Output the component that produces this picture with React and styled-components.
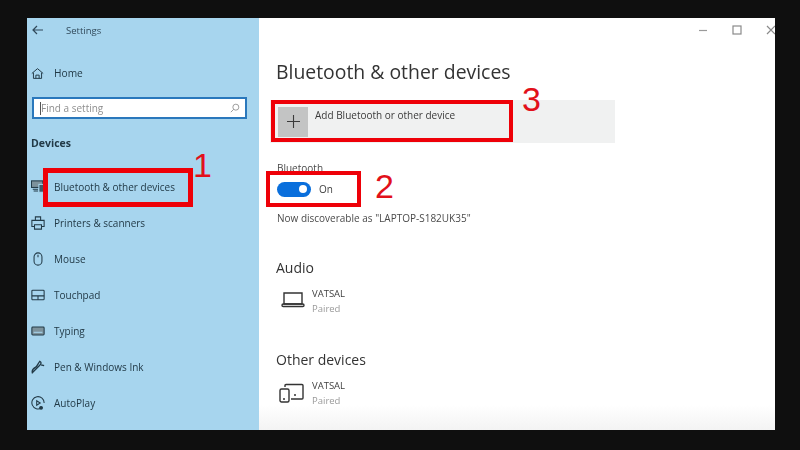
import React from "react";
import styled, { createGlobalStyle } from "styled-components";

const Global = createGlobalStyle`
  html, body { margin: 0; padding: 0; background: #0f0f0f; }
  body { width: 800px; height: 450px; overflow: hidden; font-family: "Open Sans", "Noto Sans", sans-serif; }
`;

const Page = styled.div`
  position: relative;
  width: 800px;
  height: 450px;
  box-sizing: border-box;
  padding: 18px 25px 20px 27px;
  background: #0f0f0f;
  overflow: hidden;
`;
const Window = styled.div`
  display: flex;
  height: 100%;
  filter: blur(0.55px);
`;
const Sidebar = styled.aside`
  width: 232px;
  flex: none;
  display: flex;
  flex-direction: column;
  background: #a7d5ee;
  color: #223a47;
  padding: 0 12px 0 5px;
  box-sizing: border-box;
`;
const TitleBar = styled.div`
  display: flex;
  align-items: center;
  height: 24px;
  font-size: 9.5px;
  color: #31495a;
  svg { width: 12px; height: 10px; flex: none; }
  span { margin-left: 22px; }
`;
const Home = styled.div`
  display: flex;
  align-items: center;
  gap: 10px;
  height: 20px;
  margin-top: 21px;
  font-size: 10.2px;
  color: #223a47;
  svg { margin-left: -1px; }
`;
const Search = styled.div`
  display: flex;
  align-items: center;
  justify-content: space-between;
  height: 22px;
  margin-top: 14px;
  box-sizing: border-box;
  border: 2px solid #2a78bc;
  background: #fff;
  color: #8f8f8f;
  font-size: 10px;
  padding: 0 5px 0 7px;
  position: relative;
`;
const Caret = styled.i`
  position: absolute;
  left: 6px;
  top: 3px;
  width: 1px;
  height: 13px;
  background: #555;
`;
const SectionLabel = styled.div`
  margin-top: 16px;
  height: 16px;
  line-height: 16px;
  font-size: 10.5px;
  font-weight: 700;
  color: #223a47;
  margin-left: -1px;
`;
const NavList = styled.nav`
  display: flex;
  flex-direction: column;
  margin-top: 18px;
`;
const NavItem = styled.div`
  display: flex;
  align-items: center;
  height: 36px;
  font-size: 10px;
  color: #223a47;
  svg { width: 14px; height: 14px; flex: none; margin-right: 9px; margin-left: -1px; }
`;
const Main = styled.main`
  flex: 1;
  display: flex;
  flex-direction: column;
  padding: 0 0 0 17px;
  background: linear-gradient(#fff 94%, #f3f3f3);
  color: #333;
  overflow: hidden;
`;
const WinControls = styled.div`
  display: flex;
  justify-content: flex-end;
  align-items: center;
  gap: 24px;
  height: 24px;
  margin-right: -1px;
  svg { width: 10px; height: 10px; flex: none; }
`;
const Title = styled.h1`
  margin: 16px 0 0;
  height: 28px;
  line-height: 28px;
  font-size: 19.4px;
  font-weight: 400;
  color: #333;
`;
const AddButton = styled.div`
  display: flex;
  align-items: center;
  width: 345px;
  height: 43px;
  margin: 14px 0 0 -6px;
  box-sizing: border-box;
  padding-left: 8px;
  background: #f0f1f1;
`;
const PlusTile = styled.div`
  width: 30px;
  height: 30px;
  display: flex;
  align-items: center;
  justify-content: center;
  background: #c3c4c4;
  svg { width: 13px; height: 13px; }
`;
const AddText = styled.div`
  align-self: flex-start;
  margin: 8px 0 0 7px;
  font-size: 10px;
  line-height: 14px;
  color: #3a3a3a;
`;
const Small = styled.div`
  margin-top: ${(p) => p.$top}px;
  margin-left: 1px;
  font-size: 10px;
  line-height: 14px;
  color: #4a4a4a;
`;
const ToggleRow = styled.div`
  display: flex;
  align-items: center;
  gap: 8px;
  margin: 6px 0 0 1px;
  height: 16px;
  font-size: 10px;
  color: #3f3f3f;
`;
const Toggle = styled.div`
  width: 34px;
  height: 15px;
  border-radius: 8px;
  background: #0a6fdc;
  display: flex;
  align-items: center;
  justify-content: flex-end;
  padding-right: 4px;
  box-sizing: border-box;
  i { width: 8px; height: 8px; border-radius: 50%; background: #fff; }
`;
const Heading = styled.h2`
  margin: ${(p) => p.$top}px 0 0;
  height: 20px;
  line-height: 20px;
  font-size: 14px;
  font-weight: 400;
  color: #333;
`;
const Device = styled.div`
  display: flex;
  align-items: center;
  margin-top: 8px;
  height: 30px;
  svg { width: 26px; height: 24px; flex: none; margin: 0 7px 0 3px; }
`;
const DeviceName = styled.div`
  font-size: 9.5px;
  line-height: 15px;
  color: #3f3f3f;
`;
const DeviceState = styled.div`
  font-size: 9.5px;
  line-height: 15px;
  color: #9a9a9a;
`;
const RedBox = styled.div`
  position: absolute;
  left: ${(p) => p.$x}px;
  top: ${(p) => p.$y}px;
  width: ${(p) => p.$w}px;
  height: ${(p) => p.$h}px;
  box-sizing: border-box;
  border: ${(p) => p.$b}px solid #ee0008;
`;
const Num = styled.div`
  position: absolute;
  left: ${(p) => p.$x}px;
  top: ${(p) => p.$y}px;
  font-family: "Liberation Sans", Arial, sans-serif;
  font-size: 34px;
  line-height: 36px;
  color: #e2101a;
`;

const S = { fill: "none", stroke: "currentColor", strokeWidth: 1.2 };
const Icon = ({ children }) => <svg viewBox="0 0 16 16" {...S}>{children}</svg>;

export default function App() {
  return (
    <Page>
      <Global />
      <Window>
        <Sidebar>
          <TitleBar>
            <svg viewBox="0 0 12 10" {...S}><path d="M11 5H1M5 1 1 5l4 4" /></svg>
            <span>Settings</span>
          </TitleBar>
          <Home>
            <svg width="13" height="13" viewBox="0 0 16 16" {...S}><path d="M1 8 8 2l7 6M3 7v7h10V7M6 14v-4h4v4" /></svg>
            Home
          </Home>
          <Search>
            <Caret />
            <span>Find a setting</span>
            <svg width="10" height="10" viewBox="0 0 12 12" fill="none" stroke="#8a8a8a" strokeWidth="1"><circle cx="7" cy="5" r="3.6" /><path d="M4.400 7.600 1 11" /></svg>
          </Search>
          <SectionLabel>Devices</SectionLabel>
          <NavList>
            <NavItem><Icon><rect x="0.500" y="1" width="13" height="7.500" fill="#7d929c" /><rect x="9" y="5" width="6.500" height="9" fill="#3f5a68" stroke="#a7d5ee" /><path d="M2 10.500h6M3 12.500h5" /></Icon>Bluetooth &amp; other devices</NavItem>
            <NavItem><Icon><path d="M5 5V1h6v4M4 12H1V5h14v7h-3M4 10h8v5H4z" /></Icon>Printers &amp; scanners</NavItem>
            <NavItem><Icon><rect x="3.500" y="1" width="9" height="14" rx="4.500" /><path d="M8 3v3" /></Icon>Mouse</NavItem>
            <NavItem><Icon><rect x="1" y="2.500" width="14" height="11" rx="1" /><path d="M1 9h14M8 9v4.500" /></Icon>Touchpad</NavItem>
            <NavItem><Icon><rect x="1" y="3.500" width="14" height="9" rx="1" fill="#7d929c" /><path d="M3 9.500h10" stroke="#a7d5ee" /></Icon>Typing</NavItem>
            <NavItem><Icon><path d="M10 1.500c2 1 2 2.500 0 4.500L6 10c-1.500 1.500-3 3-4.500 4.500C.8 12 2.500 10 5 8.500 7 7.500 8 4 10 1.500zM11.500 5.500l3.500 1" strokeWidth="1.500" /></Icon>Pen &amp; Windows Ink</NavItem>
            <NavItem><Icon><path d="M12 13.500A7 7 0 1 1 15 8" /><path d="M6.500 5.500v5l4-2.500z" /><circle cx="11.500" cy="13.500" r="1.600" fill="currentColor" /></Icon>AutoPlay</NavItem>
          </NavList>
        </Sidebar>
        <Main>
          <WinControls>
            <svg viewBox="0 0 10 10" fill="none" stroke="#9a9a9a" strokeWidth="1.2"><path d="M1 5.500h8" /></svg>
            <svg viewBox="0 0 10 10" fill="none" stroke="#8a8a8a" strokeWidth="1.2"><rect x="1" y="1" width="8" height="8" /></svg>
            <svg viewBox="0 0 10 10" fill="none" stroke="#8a8a8a" strokeWidth="1.2"><path d="M1 1l8 8M9 1l-8 8" /></svg>
          </WinControls>
          <Title>Bluetooth &amp; other devices</Title>
          <AddButton>
            <PlusTile><svg viewBox="0 0 13 13" fill="none" stroke="#3a3a3a" strokeWidth="1.1"><path d="M6.500 0v13M0 6.500h13" /></svg></PlusTile>
            <AddText>Add Bluetooth or other device</AddText>
          </AddButton>
          <Small $top={18}>Bluetooth</Small>
          <ToggleRow><Toggle><i /></Toggle>On</ToggleRow>
          <Small $top={14}>Now discoverable as "LAPTOP-S182UK35"</Small>
          <Heading $top={33}>Audio</Heading>
          <Device>
            <svg viewBox="0 0 26 24" fill="none" stroke="#333" strokeWidth="1.4"><path d="M5 4h18v11H5z" /><rect x="3" y="15" width="22" height="2.500" rx="1.200" /></svg>
            <div><DeviceName>VATSAL</DeviceName><DeviceState>Paired</DeviceState></div>
          </Device>
          <Heading $top={34}>Other devices</Heading>
          <Device>
            <svg viewBox="0 0 26 24" fill="none" stroke="#333" strokeWidth="1.4"><path d="M6 6V4.500Q6 3.500 7 3.500h16q1 0 1 1V17q0 1-1 1H12" /><rect x="1" y="8" width="9" height="13" rx="1.500" /><path d="M4 18h2M15 14h2" /></svg>
            <div><DeviceName>VATSAL</DeviceName><DeviceState>Paired</DeviceState></div>
          </Device>
        </Main>
      </Window>
      <RedBox $x={43} $y={168} $w={150} $h={39} $b={5} />
      <RedBox $x={266} $y={171} $w={95} $h={36} $b={4} />
      <RedBox $x={271} $y={100} $w={242} $h={42} $b={4} />
      <Num $x={193} $y={147}>1</Num>
      <Num $x={375} $y={168}>2</Num>
      <Num $x={522} $y={81}>3</Num>
    </Page>
  );
}
